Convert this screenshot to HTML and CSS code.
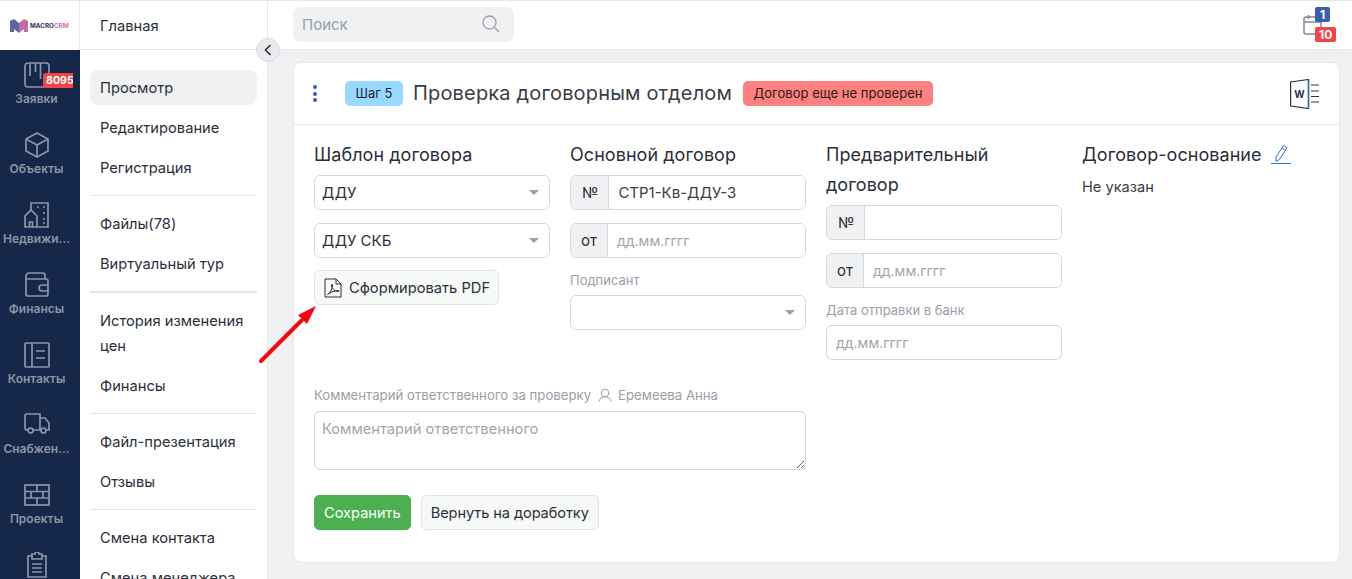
FILE: index.html
```html
<!DOCTYPE html>
<html lang="ru">
<head>
    <meta charset="UTF-8">
    <title>Проверка договорным отделом</title>
    <link rel="stylesheet" href="styles.css">
</head>
<body>

    <!-- ICON RAIL -->
    <aside class="rail">
        <div class="logo">
            <svg width="18" height="14" viewBox="0 0 18 14">
                <path d="M0 2 L4 0 L9 4 L9 14 L4 10 L4 13 L0 13 Z" fill="#5a6a9a"/>
                <path d="M9 4 L14 0 L18 2 L18 13 L14 13 L14 10 L9 14 Z" fill="#c46aa8"/>
            </svg>
            <span class="logo-text">MACRO<span class="logo-crm">CRM</span></span>
        </div>
        <nav class="rail-nav">
            <a class="rail-item">
                <svg class="rail-icon" viewBox="0 0 26 26"><rect x="1" y="1" width="24" height="24" rx="3"/><path d="M6 1v13M11.500 1v9M16.500 1v16"/></svg>
                <span class="rail-badge">8095</span>
                <span class="rail-label">Заявки</span>
            </a>
            <a class="rail-item">
                <svg class="rail-icon" viewBox="0 0 26 26"><path d="M13 1l11 6v12l-11 6-11-6V7z"/><path d="M2 7l11 6 11-6M13 13v12"/></svg>
                <span class="rail-label">Объекты</span>
            </a>
            <a class="rail-item">
                <svg class="rail-icon" viewBox="0 0 26 26"><path d="M7 8V1h17v24H13"/><path d="M1 14l6-6 6 6v11H1z"/><path d="M5.500 25v-5h3v5M13 5h2M19 5h2M19 11h2M19 17h2M19 21h2"/></svg>
                <span class="rail-label">Недвижи...</span>
            </a>
            <a class="rail-item">
                <svg class="rail-icon" viewBox="0 0 26 26"><path d="M2 7V4a3 3 0 0 1 3-3h14a2 2 0 0 1 2 2v4"/><path d="M2 6v16a2 2 0 0 0 2 2h18a2 2 0 0 0 2-2V9a2 2 0 0 0-2-2H3"/><path d="M24 13h-6a3 3 0 0 0 0 6h6"/></svg>
                <span class="rail-label">Финансы</span>
            </a>
            <a class="rail-item">
                <svg class="rail-icon" viewBox="0 0 26 26"><rect x="1" y="1" width="24" height="24" rx="1"/><path d="M8 1v24M12 9h9M12 16h9"/></svg>
                <span class="rail-label">Контакты</span>
            </a>
            <a class="rail-item">
                <svg class="rail-icon" viewBox="0 0 26 26"><path d="M4 18H3a2 2 0 0 1-2-2V4a2 2 0 0 1 2-2h13v16H9"/><path d="M16 6h5l4 5v7h-3M16 18h1"/><circle cx="6.500" cy="18.500" r="2.500"/><circle cx="19.500" cy="18.500" r="2.500"/></svg>
                <span class="rail-label">Снабжен...</span>
            </a>
            <a class="rail-item">
                <svg class="rail-icon" viewBox="0 0 26 26"><rect x="1" y="3" width="24" height="20"/><path d="M1 9.500h24M1 16h24M13 3v6.500M7 9.500V16M19 9.500V16M13 16v7"/></svg>
                <span class="rail-label">Проекты</span>
            </a>
            <a class="rail-item">
                <svg class="rail-icon" viewBox="0 0 26 26"><path d="M8 4H4v21h18V4h-4"/><path d="M8 2h3a2 2 0 0 1 4 0h3v5H8zM8 12h10M8 16h10M8 20h10"/></svg>
            </a>
        </nav>
    </aside>

    <!-- SECOND MENU -->
    <aside class="menu">
        <div class="menu-head">Главная</div>
        <ul class="menu-list">
            <li class="menu-item active">Просмотр</li>
            <li class="menu-item">Редактирование</li>
            <li class="menu-item">Регистрация</li>
            <li class="menu-sep"></li>
            <li class="menu-item">Файлы(78)</li>
            <li class="menu-item">Виртуальный тур</li>
            <li class="menu-sep thick"></li>
            <li class="menu-item">История изменения цен</li>
            <li class="menu-item">Финансы</li>
            <li class="menu-sep"></li>
            <li class="menu-item">Файл-презентация</li>
            <li class="menu-item">Отзывы</li>
            <li class="menu-sep"></li>
            <li class="menu-item">Смена контакта</li>
            <li class="menu-item">Смена менеджера</li>
        </ul>
    </aside>

    <button class="collapse-btn">
        <svg width="8" height="12" viewBox="0 0 8 12"><path d="M6.500 1L1.500 6l5 5"/></svg>
    </button>

    <main class="main">
        <header class="topbar">
            <div class="search">
                <input class="search-input" type="text" placeholder="Поиск">
                <svg class="search-icon" width="18" height="18" viewBox="0 0 18 18"><circle cx="7.500" cy="7.500" r="6.500"/><path d="M12.500 12.500L17 17"/></svg>
            </div>
            <div class="calendar">
                <svg width="19" height="21" viewBox="0 0 19 21"><rect x="1" y="3" width="17" height="17" rx="2"/><path d="M1 8h17M5.500 1v4M13.500 1v4"/></svg>
                <span class="cal-badge blue">1</span>
                <span class="cal-badge red">10</span>
            </div>
        </header>

        <section class="card">
            <div class="card-head">
                <span class="dots"><i></i><i></i><i></i></span>
                <span class="step">Шаг 5</span>
                <h1 class="card-title">Проверка договорным отделом</h1>
                <span class="status">Договор еще не проверен</span>
                <svg class="word-icon" width="30" height="30" viewBox="0 0 30 30">
                    <path d="M0.600 3L18.500 0.500V29.500L0.600 27Z" fill="#fff" stroke="#2a2f45" stroke-width="1.200"/>
                    <path d="M18.500 0.500V29.500" stroke="#2b6cb8" stroke-width="1.500"/>
                    <path d="M21 6h8M21 12h8M21 17.500h8M21 23h8" stroke="#2a2f45" stroke-width="1"/>
                    <text x="9.500" y="18.500" class="word-letter">W</text>
                </svg>
            </div>

            <div class="card-body">
                <div class="col">
                    <h2 class="col-title">Шаблон договора</h2>
                    <div class="select"><span>ДДУ</span></div>
                    <div class="select"><span>ДДУ СКБ</span></div>
                    <button class="btn btn-light btn-pdf">
                        <svg width="18" height="20" viewBox="0 0 18 20"><path d="M1 1h11l5 5v13H1z"/><path d="M12 1v5h5"/><path d="M3.500 16.500c3-2 5-6 5-9.500 0-1-1-1-1 0 0 3 3 6.500 7 6.500 1 0 1-1 0-1-3 0-8 1.500-11 4z"/></svg>
                        Сформировать PDF
                    </button>
                </div>

                <div class="col">
                    <h2 class="col-title">Основной договор</h2>
                    <div class="group">
                        <span class="group-add num">№</span>
                        <input class="group-input" type="text" value="СТР1-Кв-ДДУ-3">
                    </div>
                    <div class="group">
                        <span class="group-add">от</span>
                        <input class="group-input small" type="text" placeholder="дд.мм.гггг">
                    </div>
                    <label class="field-label">Подписант</label>
                    <div class="select"><span></span></div>
                </div>

                <div class="col">
                    <h2 class="col-title">Предварительный договор</h2>
                    <div class="group">
                        <span class="group-add num">№</span>
                        <input class="group-input" type="text">
                    </div>
                    <div class="group">
                        <span class="group-add">от</span>
                        <input class="group-input small" type="text" placeholder="дд.мм.гггг">
                    </div>
                    <label class="field-label">Дата отправки в банк</label>
                    <input class="input small" type="text" placeholder="дд.мм.гггг">
                </div>

                <div class="col">
                    <h2 class="col-title">Договор-основание<span class="edit-link">
                            <svg width="16" height="19" viewBox="0 0 16 19"><path d="M3 13L10.500 1.500l3.500 2.300L6.500 15.500l-3.500 2z"/><path d="M9 4l3.500 2.300"/></svg>
                        </span>
                    </h2>
                    <p class="col-text">Не указан</p>
                </div>

                <div class="comment">
                    <div class="comment-label">
                        Комментарий ответственного за проверку
                        <svg width="14" height="14" viewBox="0 0 14 14"><circle cx="7" cy="5" r="3.800"/><path d="M1 13.500c.5-3 3-4.700 6-4.700s5.500 1.700 6 4.700"/></svg>
                        Еремеева Анна
                    </div>
                    <textarea class="textarea" placeholder="Комментарий ответственного"></textarea>
                </div>

                <div class="actions">
                    <button class="btn btn-green">Сохранить</button>
                    <button class="btn btn-light btn-back">Вернуть на доработку</button>
                </div>
            </div>
        </section>
    </main>

    <!-- RED ARROW OVER THE PAGE -->
    <svg class="arrow" width="70" height="70" viewBox="0 0 70 70">
        <path d="M3 60L44 19" stroke="#f5070f" stroke-width="4" stroke-linecap="round"/>
        <path d="M58 5L49 23L40 14Z" fill="#f5070f"/>
    </svg>

</body>
</html>
```

FILE: styles.css
```css
* {
    margin: 0;
    padding: 0;
    box-sizing: border-box;
    font-family: Inter, "Noto Sans", sans-serif;
}

html, body { height: 100%; }

body {
    display: flex;
    height: 579px;
    overflow: hidden;
    background: #f0f1f3;
    color: #2b2f3a;
    font-size: 14.7px;
    border-top: 1px solid #e6e7ea;
    position: relative;
}

/* ICON RAIL */
.rail {
    width: 80px;
    flex-shrink: 0;
    background: #15284a;
    overflow: hidden;
}

.logo {
    height: 49px;
    background: white;
    border-right: 1px solid #e6e7ea;
    display: flex;
    align-items: center;
    padding-left: 10px;
    gap: 2px;
}

.logo-text {
    font-size: 6.3px;
    font-weight: 700;
    color: #2f3550;
}

.logo-crm { color: #d46fb4; font-weight: 700; font-size: 6.3px; }

.rail-item {
    display: flex;
    flex-direction: column;
    align-items: center;
    position: relative;
    width: 73px;
    height: 70px;
    padding: 12px 3px 0;
    overflow: hidden;
}

.rail-icon {
    width: 26px;
    height: 26px;
    flex-shrink: 0;
    fill: none;
    stroke: #8d95a6;
    stroke-width: 1.7;
}

.rail-label {
    display: block;
    margin-top: 3px;
    text-align: center;
    font-size: 12px;
    line-height: 16px;
    font-weight: 600;
    color: #8d95a6;
    white-space: nowrap;
}

.rail-badge {
    position: absolute;
    top: 23px;
    left: 43px;
    padding: 0 1px 0 3px;
    height: 15px;
    line-height: 15px;
    background: #f44444;
    color: white;
    font-size: 10.6px;
    font-weight: 700;
    border-radius: 2px;
}

/* SECOND MENU */
.menu {
    width: 188px;
    flex-shrink: 0;
    background: white;
    border-right: 1px solid #e6e7ea;
    overflow: hidden;
}

.menu-head {
    height: 49px;
    line-height: 51px;
    padding-left: 20px;
    border-bottom: 1px solid #e6e7ea;
    color: #2b2f3a;
}

.collapse-btn {
    position: absolute;
    top: 37px;
    left: 256px;
    width: 24px;
    height: 24px;
    border-radius: 50%;
    border: 1px solid #d9dbe0;
    background: #e8eaed;
    display: flex;
    align-items: center;
    justify-content: center;
    z-index: 2;
}

.collapse-btn svg { fill: none; stroke: #2b2f3a; stroke-width: 1.6; }

.menu-list {
    list-style: none;
    padding: 20px 10px 0;
}

.menu-item {
    padding: 6px 10px 4px;
    margin-bottom: 5px;
    line-height: 25px;
    border-radius: 8px;
    color: #2b2f3a;
}

.menu-item.active { background: #f0f1f3; }

.menu-sep {
    height: 1px;
    margin: 10px 0;
    background: #e4e5e8;
}

.menu-sep.thick { height: 2px; margin-bottom: 10px; }

/* TOP BAR */
.main {
    flex: 1;
    min-width: 0;
    display: flex;
    flex-direction: column;
}

.topbar {
    height: 49px;
    flex-shrink: 0;
    background: white;
    border-bottom: 1px solid #e6e7ea;
    display: flex;
    align-items: center;
    justify-content: space-between;
    padding: 0 17px 2px 25px;
}

.search {
    width: 221px;
    height: 35px;
    background: #f0f1f3;
    border-radius: 8px;
    display: flex;
    align-items: center;
    padding: 0 14px 0 9px;
}

.search-input {
    flex: 1;
    min-width: 0;
    border: none;
    background: none;
    font-size: 15px;
    outline: none;
}

.search-input::placeholder { color: #9a9ea8; }

.search-icon { fill: none; stroke: #9a9ea8; stroke-width: 1.3; }

.calendar {
    position: relative;
    width: 32px;
    height: 35px;
    display: flex;
    align-items: center;
}

.calendar svg { fill: none; stroke: #7f8594; stroke-width: 1.5; }

.cal-badge {
    position: absolute;
    left: 12px;
    height: 15px;
    line-height: 15px;
    padding: 0 4px;
    min-width: 15px;
    text-align: center;
    color: white;
    font-size: 12px;
    font-weight: 700;
    border-radius: 2px;
}

.cal-badge.blue { top: 0; background: #3a5fae; }
.cal-badge.red { bottom: 0; background: #f44444; }

/* CARD */
.card {
    margin: 12px 12px 0 25px;
    height: 501px;
    background: white;
    border: 1px solid #e6e7ea;
    border-radius: 8px;
}

.card-head {
    height: 62px;
    display: flex;
    align-items: center;
    padding: 0 19px 0 19px;
    border-bottom: 1px solid #e6e7ea;
}

.dots {
    display: flex;
    flex-direction: column;
    gap: 2.500px;
    width: 4px;
    margin-right: 28px;
}

.dots i {
    width: 4px;
    height: 4px;
    border-radius: 50%;
    background: #3a5fae;
}

.step {
    height: 25px;
    line-height: 25px;
    padding: 0 10.500px;
    background: #99d8ff;
    border-radius: 5px;
    font-size: 13px;
    color: #1f2430;
    margin-right: 10px;
}

.card-title {
    font-size: 20px;
    font-weight: 400;
    letter-spacing: 0.17px;
    color: #3a3d47;
    margin-right: 11px;
    margin-bottom: 2px;
}

.status {
    height: 25px;
    line-height: 25px;
    padding: 0 10.500px;
    background: #ff8080;
    border-radius: 5px;
    font-size: 13px;
    letter-spacing: 0.02px;
    color: #2a1a1a;
}

.word-icon { margin-left: auto; }

.word-letter {
    font-size: 10px;
    font-weight: 700;
    text-anchor: middle;
    fill: #2a2f45;
}

.card-body {
    display: grid;
    grid-template-columns: repeat(4, 236px);
    column-gap: 20px;
    padding: 15px 20px 0;
}

.col-title {
    font-size: 18px;
    letter-spacing: 0.05px;
    font-weight: 400;
    line-height: 30px;
    color: #2b2f3a;
    margin-bottom: 5px;
}

.col-text { font-size: 14.6px; line-height: 25px; margin-top: 1px; color: #3a3d47; }

.edit-link {
    display: inline-flex;
    justify-content: center;
    width: 20px;
    height: 20px;
    margin-left: 9px;
    border-bottom: 1px solid #3a6ec0;
    vertical-align: -2px;
}

.edit-link svg { fill: none; stroke: #3a6ec0; stroke-width: 1; }

/* FORM CONTROLS */
.select, .group, .input {
    height: 35px;
    width: 100%;
    border: 1px solid #d6d8dc;
    border-radius: 6px;
    background: white;
    margin-bottom: 13px;
}

.select {
    position: relative;
    display: flex;
    align-items: center;
    padding-left: 7px;
    font-size: 15px;
}

.select::after {
    content: "";
    position: absolute;
    right: 10px;
    top: 14px;
    border-left: 5px solid transparent;
    border-right: 5px solid transparent;
    border-top: 5px solid #9a9ea8;
}

.group {
    display: flex;
    overflow: hidden;
}

.group-add {
    padding: 0 10px;
    line-height: 33px;
    font-size: 15px;
    background: #f0f1f3;
    border-right: 1px solid #d6d8dc;
    color: #2b2f3a;
}

.group-add.num { padding: 0 10px 0 11px; }

.group-input {
    flex: 1;
    min-width: 0;
    border: none;
    outline: none;
    padding: 0 9px;
    font-size: 15px;
    color: #3a3d47;
}

.input {
    padding: 0 9px;
    outline: none;
}

.small { font-size: 14px; }

input::placeholder, textarea::placeholder { color: #a2a5ae; opacity: 1; }

.field-label {
    display: block;
    padding-top: 1px;
    font-size: 13px;
    line-height: 16px;
    color: #9a9ea8;
    margin-bottom: 7px;
}

.btn {
    height: 35px;
    border-radius: 5px;
    font-size: 14.6px;
    padding: 0 9px;
    cursor: pointer;
}

.btn-light {
    background: #f7f8f8;
    border: 1px solid #e2e3e6;
    color: #2b2f3a;
}

.btn-back { letter-spacing: -0.1px; }

.btn-pdf {
    display: flex;
    align-items: center;
    gap: 7px;
    font-size: 14.7px;
    padding-right: 8px;
    margin-top: -1px;
}

.btn-pdf svg { fill: none; stroke: #2b2f3a; stroke-width: 1; }

.btn-green {
    background: #4caf50;
    border: 1px solid #4caf50;
    color: white;
}

.comment {
    grid-column: span 2;
    margin-top: 14px;
}

.comment-label {
    display: flex;
    align-items: center;
    gap: 6.500px;
    font-size: 13.2px;
    line-height: 16px;
    color: #9a9ea8;
    margin-bottom: 8px;
}

.comment-label svg { fill: none; stroke: #9a9ea8; stroke-width: 1; }

.textarea {
    display: block;
    width: 100%;
    height: 59px;
    padding: 8px 7px;
    border: 1px solid #d6d8dc;
    border-radius: 6px;
    font-size: 14.7px;
    outline: none;
}

.actions {
    grid-column: 1 / -1;
    display: flex;
    gap: 10px;
    margin-top: 25px;
}

/* ARROW */
.arrow {
    position: absolute;
    left: 258px;
    top: 300px;
    z-index: 3;
}
```
